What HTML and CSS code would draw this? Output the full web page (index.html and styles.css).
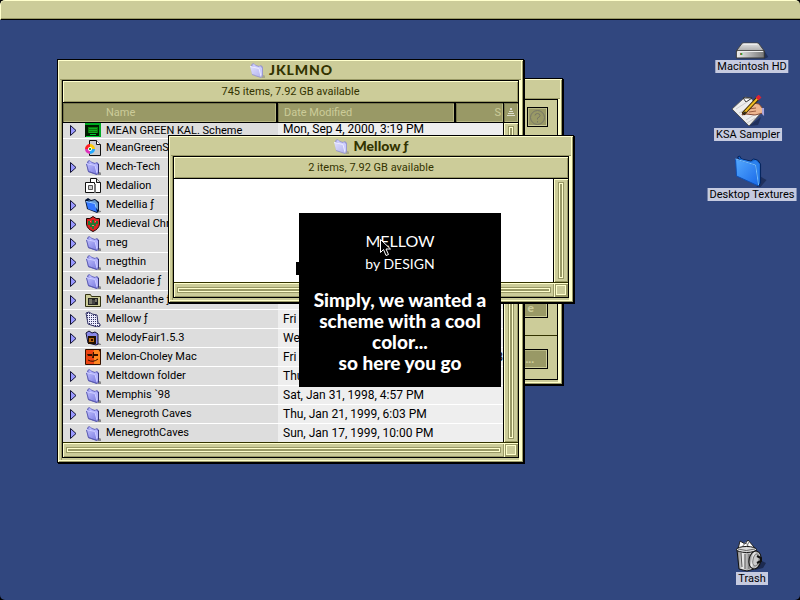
FILE: index.html
```html
<!DOCTYPE html>
<html lang="en">
<head>
<meta charset="utf-8">
<title>Desktop</title>
<link rel="stylesheet" href="styles.css">
</head>
<body>
<svg class="defs" aria-hidden="true">
  <defs>
    <linearGradient id="lav" x1="0" y1="0" x2="1" y2="1"><stop offset="0" stop-color="#c0c0ff"/><stop offset="1" stop-color="#7c7ce0"/></linearGradient>
    <linearGradient id="pale" x1="0" y1="0" x2="1" y2="1"><stop offset="0" stop-color="#e0e0ff"/><stop offset="1" stop-color="#b4b4ee"/></linearGradient>
    <linearGradient id="blue" x1="0" y1="0" x2="1" y2="1"><stop offset="0" stop-color="#55aaff"/><stop offset="1" stop-color="#1868e8"/></linearGradient>
    <linearGradient id="metal" x1="0" y1="0" x2="1" y2="0"><stop offset="0" stop-color="#777"/><stop offset=".3" stop-color="#eee"/><stop offset=".55" stop-color="#aaa"/><stop offset=".75" stop-color="#ddd"/><stop offset="1" stop-color="#555"/></linearGradient>
    <linearGradient id="drive" x1="0" y1="0" x2="0" y2="1"><stop offset="0" stop-color="#e4e4e4"/><stop offset="1" stop-color="#aaa"/></linearGradient>
    <linearGradient id="front" x1="0" y1="0" x2="1" y2="0"><stop offset="0" stop-color="#eee"/><stop offset="1" stop-color="#777"/></linearGradient>
    <pattern id="dots" width="2" height="2" patternUnits="userSpaceOnUse"><rect width="2" height="2" fill="#eef"/><rect width="1" height="1" fill="#336"/></pattern>
  </defs>
  <symbol id="tri" viewBox="0 0 7 11"><path d="M.5.5 6 5.500.5 10.500z" fill="#9999ff" stroke="#111133"/></symbol>
  <symbol id="folder" viewBox="0 0 16 16">
    <path d="M11 14l4-1 1 1v2h-3z" fill="#888"/>
    <path d="M2 3l2-2 3 2 3 1 2-1 2 2v9l-2 2-9-3z" fill="#6666bb"/>
    <path d="M3 3l2-1 2 2 3 1 1-1 2 2v8z" fill="#b4b4ff"/>
    <path d="M1 4l9 2 2 9-9-3z" fill="url(#lav)"/>
    <path d="M1 4.500l9 2 2 8" fill="none" stroke="#ccccff"/>
    <path d="M1.500 5l2 7.500 8.500 3" fill="none" stroke="#5c5cb0"/>
    <path d="M13.500 5v9.500" stroke="#333377"/>
  </symbol>
  <symbol id="folder-pale" viewBox="0 0 16 16">
    <path d="M11 14l4-1 1 1v2h-3z" fill="#aaa988"/>
    <path d="M2 3l2-2 3 2 3 1 2-1 2 2v9l-2 2-9-3z" fill="#9999cc"/>
    <path d="M3 3l2-1 2 2 3 1 1-1 2 2v8z" fill="#ccccff"/>
    <path d="M1 4l9 2 2 9-9-3z" fill="url(#pale)"/>
    <path d="M1 4.500l9 2 2 8" fill="none" stroke="#ececff"/>
  </symbol>
  <symbol id="folder-blue" viewBox="0 0 16 16">
    <path d="M12 13l4 1v1l-4 1z" fill="#888"/>
    <path d="M0 3l3-2 3 2 4-1 4 3v9l-2 2L2 12z" fill="#001133"/>
    <path d="M3 3l3 1 4-1 3 3v7z" fill="#6699cc"/>
    <path d="M1 4l9 2 2 9-9-3z" fill="#3377ff"/>
    <path d="M1 4.500l9 2 1 4" fill="none" stroke="#99ccff"/>
  </symbol>
  <symbol id="doc-scheme" viewBox="0 0 16 16">
    <path d="M4.500.5h7l4 4v11h-11z" fill="#ccc" stroke="#111"/><path d="M11.500.5v4h4" fill="#fff" stroke="#111"/>
    <circle cx="5" cy="9" r="4" fill="#fff"/>
    <g fill="none" stroke-width="3"><path d="M1.500 9A3.500 3.500 0 0 1 5 5.500" stroke="#ff2020"/><path d="M5 5.500A3.500 3.500 0 0 1 8.500 9" stroke="#ffcc00"/><path d="M8.500 9A3.500 3.500 0 0 1 5 12.500" stroke="#22aaff"/><path d="M5 12.500A3.500 3.500 0 0 1 1.500 9" stroke="#dd33bb"/></g>
    <path d="M4 9h2" stroke="#22aa44" stroke-width="2"/>
  </symbol>
  <symbol id="doc-stack" viewBox="0 0 16 16">
    <path d="M5.500.5h6l4 4v10h-10z" fill="#fff" stroke="#111"/><path d="M11.500.5v4h4" fill="#ddd" stroke="#111"/>
    <path d="M.5 4.500h9v10h-9z" fill="#fff" stroke="#111"/><path d="M3.500 7.500h4v4h-4z" fill="#ccc" stroke="#555"/><path d="M9 15V6h2v9z" fill="#777"/>
  </symbol>
  <symbol id="green" viewBox="0 0 16 16">
    <path d="M0 1h16v14H0z" fill="#001a00"/><path d="M0 1h16v2H0zM14 3h2v12h-2z" fill="#00aa22"/>
    <path d="M3 5h10v6H3z" fill="#087808"/><path d="M4 6.500h8M4 8.500h8M4 10.500h8" stroke="#11aa22"/><path d="M1 14.500h13M5 12.500h6" stroke="#00cc33"/>
  </symbol>
  <symbol id="shield" viewBox="0 0 16 16">
    <path d="M1.500 2.500Q5 3.500 8 .5 11 3.500 14.500 2.500V8Q14 13 8 15.500 2 13 1.500 8z" fill="#dd2222" stroke="#220000"/>
    <path d="M3 5h2v2h2V4h2v3h2V5h2v3h-2v2h-2v3H7v-2H5V9H3z" fill="#227733"/><path d="M5 5h1v1H5zM10 5h1v1h-1zM7 9h2v1H7z" fill="#ff7766"/>
  </symbol>
  <symbol id="photo" viewBox="0 0 16 16">
    <path d="M.5 2.500h5l1 2h9v10H.5z" fill="#cccc99" stroke="#333311"/><path d="M3 6h10v7H3z" fill="#222"/><path d="M4 7h3v5H4zM10 7h2v3h-2z" fill="#77776a"/><path d="M7 8h3v4H7z" fill="#444"/>
  </symbol>
  <symbol id="dotted" viewBox="0 0 16 16">
    <path d="M1 2l3-1 3 2 5 1 1 8 2 1v2l-3 1-9-3z" fill="url(#dots)" stroke="#333366"/>
  </symbol>
  <symbol id="melody" viewBox="0 0 16 16">
    <path d="M11 12l5 2v1h-5z" fill="#888"/><path d="M1 3l3-2 3 2 3-1 3 2v10l-2 1L3 13z" fill="#8888e8" stroke="#111133"/>
    <path d="M3 6h8v8H3z" fill="#221100"/><path d="M4 8h5v4H4z" fill="#bb6a1a"/><path d="M6 9h2v2H6z" fill="#331100"/>
  </symbol>
  <symbol id="melon" viewBox="0 0 16 16">
    <path d="M.5.5h15v15H.5z" fill="#ff8822" stroke="#331100"/><path d="M1 1h8L7 8h2v7H1z" fill="#ee4411"/>
    <path d="M2 5h5v2H3zM9 5h4v2H9zM8 3h1v6H7z" fill="#331100"/><path d="M3 11q5 3 10-1" fill="none" stroke="#331100"/><path d="M13 0h3v3h-1z" fill="#331100"/>
  </symbol>
</svg>

<header class="menubar"></header>

<main class="desktop">
  <section class="window utility">
    <div class="titlebar"></div>
    <div class="content">
      <div class="pane pane-top">
        <button class="push help" type="button" aria-label="Help"><svg width="17" height="17" viewBox="0 0 17 17" fill="none" stroke="#777766"><circle cx="8.500" cy="8.500" r="7"/><path d="M6 6.500Q6 4.500 8.500 4.500T11 6.500Q11 8 8.500 9v1.500M8.500 12v1.500"/></svg></button>
        <button class="push" type="button">e</button>
      </div>
      <div class="pane"><button class="push" type="button">...</button></div>
    </div>
  </section>

  <section class="window files">
    <div class="titlebar"><svg class="icon"><use href="#folder-pale"/></svg><h2>J&#8202;K&#8202;L&#8202;M&#8202;N&#8202;O</h2></div>
    <div class="content">
      <p class="info">745 items, 7.92 GB available</p>
      <div class="listing">
        <table>
          <colgroup><col class="c-name"><col class="c-date"><col></colgroup>
          <thead><tr><th class="h-name">Name</th><th>Date Modified</th><th class="h-size">S</th></tr></thead>
          <tbody>
            <tr><td><div class="name"><svg class="tri"><use href="#tri"/></svg><svg class="icon"><use href="#green"/></svg>MEAN GREEN KAL. Scheme</div></td><td>Mon, Sep 4, 2000, 3:19 PM</td><td></td></tr>
            <tr><td><div class="name"><span class="tri"></span><svg class="icon"><use href="#doc-scheme"/></svg>MeanGreenSc</div></td><td></td><td></td></tr>
            <tr><td><div class="name"><svg class="tri"><use href="#tri"/></svg><svg class="icon"><use href="#folder"/></svg>Mech-Tech</div></td><td></td><td></td></tr>
            <tr><td><div class="name"><span class="tri"></span><svg class="icon"><use href="#doc-stack"/></svg>Medalion</div></td><td></td><td></td></tr>
            <tr><td><div class="name"><svg class="tri"><use href="#tri"/></svg><svg class="icon"><use href="#folder-blue"/></svg>Medellia ƒ</div></td><td></td><td></td></tr>
            <tr><td><div class="name"><svg class="tri"><use href="#tri"/></svg><svg class="icon"><use href="#shield"/></svg>Medieval Chr</div></td><td></td><td></td></tr>
            <tr><td><div class="name"><svg class="tri"><use href="#tri"/></svg><svg class="icon"><use href="#folder"/></svg>meg</div></td><td></td><td></td></tr>
            <tr><td><div class="name"><svg class="tri"><use href="#tri"/></svg><svg class="icon"><use href="#folder"/></svg>megthin</div></td><td></td><td></td></tr>
            <tr><td><div class="name"><svg class="tri"><use href="#tri"/></svg><svg class="icon"><use href="#folder"/></svg>Meladorie ƒ</div></td><td></td><td></td></tr>
            <tr><td><div class="name"><svg class="tri"><use href="#tri"/></svg><svg class="icon"><use href="#photo"/></svg>Melananthe ƒ</div></td><td></td><td></td></tr>
            <tr><td><div class="name"><svg class="tri"><use href="#tri"/></svg><svg class="icon"><use href="#dotted"/></svg>Mellow ƒ</div></td><td>Fri</td><td></td></tr>
            <tr><td><div class="name"><svg class="tri"><use href="#tri"/></svg><svg class="icon"><use href="#melody"/></svg>MelodyFair1.5.3</div></td><td>Wed</td><td></td></tr>
            <tr><td><div class="name"><span class="tri"></span><svg class="icon"><use href="#melon"/></svg>Melon-Choley Mac</div></td><td>Fri</td><td class="size">8</td></tr>
            <tr><td><div class="name"><svg class="tri"><use href="#tri"/></svg><svg class="icon"><use href="#folder"/></svg>Meltdown folder</div></td><td>Thu</td><td></td></tr>
            <tr><td><div class="name"><svg class="tri"><use href="#tri"/></svg><svg class="icon"><use href="#folder"/></svg>Memphis `98</div></td><td>Sat, Jan 31, 1998, 4:57 PM</td><td></td></tr>
            <tr><td><div class="name"><svg class="tri"><use href="#tri"/></svg><svg class="icon"><use href="#folder"/></svg>Menegroth Caves</div></td><td>Thu, Jan 21, 1999, 6:03 PM</td><td></td></tr>
            <tr><td><div class="name"><svg class="tri"><use href="#tri"/></svg><svg class="icon"><use href="#folder"/></svg>MenegrothCaves</div></td><td>Sun, Jan 17, 1999, 10:00 PM</td><td></td></tr>
          </tbody>
        </table>
        <div class="side">
          <button class="sort" type="button" aria-label="Sort order"><svg width="8" height="9" viewBox="0 0 8 9"><path d="M3 0h2v2H3zM2 3h4v1H2zM1 5h6v1H1zM0 7h8v1H0z" fill="#ddddcc"/></svg></button>
          <div class="track vertical"></div>
        </div>
      </div>
      <div class="foot"><div class="track"></div><div class="grow"></div></div>
    </div>
  </section>

  <section class="window mellow">
    <div class="titlebar"><svg class="icon"><use href="#folder-pale"/></svg><h2>Mellow ƒ</h2></div>
    <div class="content">
      <p class="info">2 items, 7.92 GB available</p>
      <div class="listing"><div class="blank"></div><div class="side"><div class="track vertical"></div></div></div>
      <div class="foot"><div class="track"></div><div class="grow"></div></div>
    </div>
  </section>

  <aside class="splash">
    <p class="brand">MELLOW</p>
    <p class="byline">by DESIGN</p>
    <p class="message">Simply, we wanted a scheme with a cool color...<br>so here you go</p>
    <svg class="cursor" width="12" height="18" viewBox="0 0 12 18"><path d="M.5.5v13l3-3 2.500 6 2.500-1-2.500-5.500h4.500z" fill="#000" stroke="#fff"/></svg>
  </aside>

  <a class="item hd" href="#"><svg width="34" height="18" viewBox="0 0 34 18"><path d="M28 7l5 8-4 2z" fill="#20305c"/><path d="M7 1h16l6 8H1z" fill="url(#drive)" stroke="#444"/><path d="M8 2h14" stroke="#fff"/><path d="M1 9h28v7H1z" fill="url(#front)" stroke="#333"/><path d="M2 9.500h26" stroke="#eee"/><path d="M5 11h2v2H5z" fill="#0c3"/><path d="M5 11h1v2H5z" fill="#c33"/></svg><span>Macintosh HD</span></a>
  <a class="item ksa" href="#"><svg width="34" height="33" viewBox="0 0 34 33"><path d="M18 31l12-9-3 8z" fill="#20305c"/><path d="M1 14L14 2l6 1 11 14-13 14z" fill="#eee" stroke="#555"/><path d="M12 3l3 4 6-4z" fill="#fff" stroke="#333"/><path d="M5 14l11-7M8 18l9-5M15 25l8-5M16 28l8-5" stroke="#ccc"/><path d="M17 12l5-4 6 1 4 5v4l-8 2-9-1-4 1 1-3z" fill="#edb690" stroke="#844a35"/><path d="M31 13h2v8l-2-2z" fill="#aaa6dd"/><path d="M17 14l8-1M18 17l7-1" stroke="#9a5c40"/><path d="M12 19L27 3" stroke="#332200" stroke-width="4"/><path d="M13 18L27 3" stroke="#eebb22" stroke-width="2"/><path d="M26 4l3-3" stroke="#dd2233" stroke-width="4"/><path d="M11 20l3-4 1 2z" fill="#222"/></svg><span>KSA Sampler</span></a>
  <a class="item textures" href="#"><svg width="34" height="33" viewBox="0 0 34 33"><path d="M25 21l7 4-6 7h-4z" fill="#20305c"/><path d="M3 2l2-1 2 3 9 2 3-2 4 1 3 4v19l-2 3z" fill="#1464cc" stroke="#06245c"/><path d="M6 4l11 3 4-2 4 4v18z" fill="#2a80ee"/><path d="M1 4l20 6 3 21L2 21z" fill="url(#blue)" stroke="#0f4fb4"/><path d="M1 4l20 6 3 20" fill="none" stroke="#77c0ff"/></svg><span>Desktop Textures</span></a>
  <a class="item trash" href="#"><svg width="34" height="33" viewBox="0 0 34 33"><path d="M23 20l8 4-3 5-8 2z" fill="#1c2a50"/><path d="M3 10l2-8 5 3 3-4 6 7-1 3z" fill="#fff" stroke="#222"/><path d="M7 8l4-5 3 6M14 3l-3 6" fill="none" stroke="#777"/><path d="M2 11h19l-2 19-7 2-8-2z" fill="url(#metal)" stroke="#111"/><path d="M6 14l1 14M10 15v15M14 15v15M18 14l-1 14" stroke="#555"/><ellipse cx="11.500" cy="10.500" rx="10" ry="3" fill="#ddd" stroke="#111"/><path d="M3 10q8 3 17 0" fill="none" stroke="#666"/><ellipse cx="20" cy="21" rx="6" ry="9" transform="rotate(12 20 21)" fill="url(#metal)" stroke="#111"/><ellipse cx="21" cy="21" rx="3" ry="6" transform="rotate(12 21 21)" fill="#ccc" stroke="#777"/><path d="M22 17l4 2v3l-4 2" fill="none" stroke="#111" stroke-width="2"/></svg><span>Trash</span></a>
</main>
</body>
</html>
```
FILE: styles.css
```css
:root {
  --light: #ffffcc;
  --tan: #cccc99;
  --dark: #999966;
  --ink: #333300;
}
* { box-sizing: border-box; }
body {
  margin: 0;
  height: 100vh;
  display: flex;
  flex-direction: column;
  overflow: hidden;
  background: #000;
  font: 11px/14px Roboto, "Liberation Sans", sans-serif;
  color: #000;
}
h2, p { margin: 0; }
.defs { position: absolute; width: 0; height: 0; }
.icon { width: 16px; height: 16px; flex: none; }

.menubar {
  height: 20px;
  flex: none;
  background: var(--tan);
  border-top: 1px solid var(--light);
  border-bottom: 1px solid #000;
  border-left: 1px solid var(--light);
  box-shadow: inset 0 -1px var(--dark);
  border-radius: 5px 5px 0 0;
}
.desktop {
  flex: 1;
  position: relative;
  background: #31477f;
  border-radius: 0 0 5px 5px;
}

/* Windows */
.window {
  position: absolute;
  background: var(--tan);
  border: 1px solid #000;
  padding: 0 4px 4px;
  box-shadow: 1px 1px #000, inset 1px 1px var(--light), inset -1px -1px var(--dark), inset -2px -2px var(--light), inset 3px 0 var(--tan), inset 4px 0 var(--dark), inset -4px 0 var(--light);
}
.files { left: 57px; top: 39px; width: 467px; }
.mellow { left: 168px; top: 115px; width: 406px; }
.utility { left: 420px; top: 58px; width: 143px; }
.titlebar {
  height: 20px;
  margin: 0 -2px;
  background: var(--tan);
  box-shadow: inset 0 1px var(--light), inset 0 -1px var(--dark);
  display: flex;
  align-items: center;
  justify-content: center;
  gap: 4px;
}
.titlebar h2 { font: 900 14px/18px Lato, sans-serif; color: var(--ink); }
.content { border: 1px solid #000; }
.info, .foot .track, .foot .grow, .track.vertical {
  background: var(--tan);
  box-shadow: inset 1px 1px var(--light), inset -1px -1px var(--dark);
}
.info {
  height: 21px;
  line-height: 21px;
  text-align: center;
  color: var(--ink);
}
.listing { display: flex; border-top: 1px solid #000; background: #fff; }
.side { width: 15px; flex: none; display: flex; flex-direction: column; border-left: 1px solid #000; }
.blank { flex: 1; height: 103px; }
.track { position: relative; }
.track::before {
  content: "";
  position: absolute;
  inset: 5px 4px;
  border: 1px solid var(--light);
  background: var(--dark);
  outline: 1px solid var(--dark);
}
.track.vertical { flex: 1; }
.track.vertical::before { inset: 4px 5px; }
.foot { height: 15px; display: flex; border-top: 1px solid var(--ink); }
.foot .track { flex: 1; }
.foot .grow { width: 14px; display: grid; place-items: center; }
.grow::before { content: ""; width: 8px; height: 8px; border: 1px solid var(--light); outline: 1px solid var(--dark); }

/* File list */
table { flex: 1; min-width: 0; table-layout: fixed; border-collapse: separate; border-spacing: 0; }
.c-name { width: 215px; }
.c-date { width: 178px; }
th {
  height: 20px;
  padding: 0 6px;
  background: var(--dark);
  color: var(--tan);
  font-weight: 400;
  text-align: left;
  border-right: 2px solid #000;
  border-bottom: 1px solid #000;
  box-shadow: inset 1px 1px #77774c, inset -1px -1px #b8b884;
}
.h-name { padding-left: 43px; }
.h-size { border-right: 0; padding-right: 2px; text-align: right; }
td {
  height: 19px;
  padding: 0 0 0 5px;
  border-top: 1px solid #fff;
  background: #eee;
  font-size: 12px;
  white-space: nowrap;
  overflow: hidden;
}
td:first-child { background: #ddd; padding-left: 7px; font-size: 11px; }
tbody tr:first-child td { height: 15px; border-top: 0; vertical-align: top; line-height: 13px; }
.name { display: flex; align-items: center; height: 14px; }
.name .icon { margin-right: 5px; }
.tri { width: 7px; height: 11px; margin-right: 8px; flex: none; }
.size { text-align: right; }
.sort {
  height: 20px;
  padding: 0;
  border: 0;
  border-bottom: 1px solid #000;
  background: var(--dark);
  box-shadow: inset 1px 1px #77774c, inset -1px -1px #b8b884;
  display: grid;
  place-items: center;
}

/* Utility window */
.pane { height: 44px; padding: 13px 9px 0; border-top: 1px solid var(--ink); display: flex; flex-direction: column; align-items: flex-end; }
.pane-top { height: 235px; padding: 7px 9px 17px; border-top: 0; justify-content: space-between; }
.push {
  width: 90px;
  height: 20px;
  padding: 0 13px;
  border: 1px solid #000;
  background: var(--dark);
  box-shadow: inset -1px -1px var(--tan), inset 1px 1px #b8b884;
  color: var(--tan);
  font: 900 12px/14px Lato, sans-serif;
  text-align: right;
}
.help { width: 21px; padding: 0; display: grid; place-items: center; }

/* Splash */
.splash {
  position: absolute;
  left: 299px;
  top: 193px;
  width: 202px;
  height: 174px;
  padding: 16px 8px 0;
  background: #000;
  color: #fff;
  text-align: center;
}
.splash::before { content: ""; position: absolute; left: -3px; top: 49px; width: 3px; height: 13px; background: #000; }
.brand { font: 16px/24px Lato, sans-serif; }
.byline { font: 14px/22px Lato, sans-serif; }
.message { margin-top: 14px; font: 900 19px/21px Lato, sans-serif; }
.cursor { position: absolute; left: 81px; top: 26px; }

/* Desktop items */
.item {
  position: absolute;
  display: flex;
  flex-direction: column;
  align-items: center;
  color: #000;
  text-decoration: none;
  transform: translateX(-50%);
  white-space: nowrap;
}
.item span { padding: 0 2px; line-height: 13px; background: #c6cbe0; }
.hd { left: 752px; top: 22px; }
.ksa { left: 748px; top: 75px; }
.textures { left: 752px; top: 135px; }
.trash { left: 752px; top: 519px; }
```
